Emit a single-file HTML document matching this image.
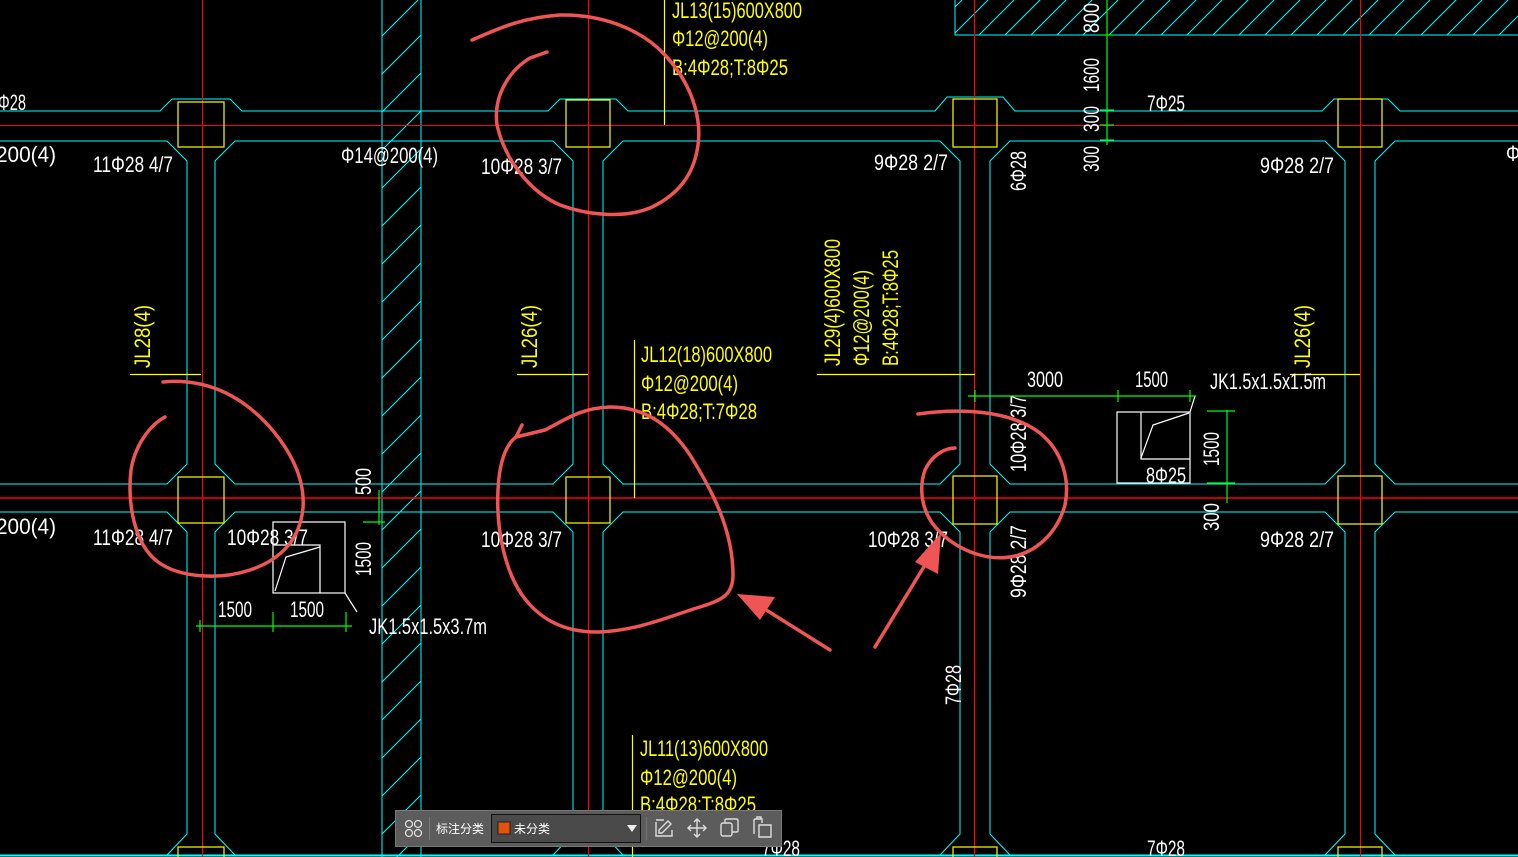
<!DOCTYPE html>
<html><head><meta charset="utf-8">
<style>
html,body{margin:0;padding:0;background:#000;width:1518px;height:857px;overflow:hidden}
svg{display:block}
text{font-family:"Liberation Sans","Noto Sans CJK SC",sans-serif;font-size:22px}
.w{fill:#fff}.y{fill:#ff0}
.tb{font-size:12px;fill:#fff}
</style></head><body>
<svg width="1518" height="857" viewBox="0 0 1518 857" xmlns="http://www.w3.org/2000/svg">
<defs>
<pattern id="h1" patternUnits="userSpaceOnUse" width="38" height="38"><path d="M-2,2 L2,-2 M0,38 L38,0 M36,40 L40,36" stroke="#0ff" stroke-width="1"/></pattern>
<pattern id="h2" patternUnits="userSpaceOnUse" width="26" height="26"><path d="M-2,2 L2,-2 M0,26 L26,0 M24,28 L28,24" stroke="#0ff" stroke-width="1"/></pattern>
</defs>
<rect width="1518" height="857" fill="#000"/>

<rect x="382" y="-2" width="39" height="870" fill="url(#h1)" stroke="#0ff" stroke-width="1"/>
<rect x="955" y="-5" width="580" height="40" fill="url(#h2)" stroke="#0ff" stroke-width="1"/>

<g fill="none" stroke="#0ff" stroke-width="1">
<path d="M-10,111 L160,111 L172,99 L230,99 L242,111 L548,111 L560,99 L616,99 L628,111 L935,111 L947,97 L1003,97 L1015,111 L1322,111 L1334,99 L1388,99 L1400,111 L1530,111"/>
<path d="M-10,141 L167,141 L187,161 L187,464 L167,484 L-10,484"/>
<path d="M215,161 L235,141 L553,141 L573,161 L573,464 L553,484 L235,484 L215,464 Z"/>
<path d="M603,161 L623,141 L940,141 L960,161 L960,464 L940,484 L623,484 L603,464 Z"/>
<path d="M990,161 L1010,141 L1325,141 L1345,161 L1345,464 L1325,484 L1010,484 L990,464 Z"/>
<path d="M1530,141 L1395,141 L1375,161 L1375,464 L1395,484 L1530,484"/>
<path d="M-10,512 L167,512 L187,532 L187,834 L167,855 L-10,855"/>
<path d="M215,532 L235,512 L553,512 L573,532 L573,834 L553,855 L235,855 L215,834 Z"/>
<path d="M603,532 L623,512 L940,512 L960,532 L960,834 L940,855 L623,855 L603,834 Z"/>
<path d="M990,532 L1010,512 L1325,512 L1345,532 L1345,834 L1325,855 L1010,855 L990,834 Z"/>
<path d="M1530,512 L1395,512 L1375,532 L1375,834 L1395,855 L1530,855"/>
</g>
<line x1="0" y1="855.5" x2="1518" y2="855.5" stroke="#0ff" stroke-width="2"/>

<g stroke="#f00">
<line x1="0" y1="125.5" x2="1518" y2="125.5" stroke-width="1"/>
<line x1="0" y1="498" x2="1518" y2="498" stroke-width="1.5"/>
<line x1="202.5" y1="0" x2="202.5" y2="857" stroke-width="1"/>
<line x1="588.5" y1="0" x2="588.5" y2="857" stroke-width="1.2"/>
<line x1="974.5" y1="0" x2="974.5" y2="857" stroke-width="1.2"/>
<line x1="1360.5" y1="0" x2="1360.5" y2="857" stroke-width="1"/>
</g>

<g fill="none" stroke="#ff0" stroke-width="1.2">
<rect x="178" y="102" width="46" height="45"/>
<rect x="566" y="100" width="44" height="47"/>
<rect x="953" y="99" width="44" height="48"/>
<rect x="1338" y="99" width="44" height="48"/>
<rect x="178" y="477" width="46" height="46"/>
<rect x="566" y="477" width="44" height="46"/>
<rect x="953" y="476" width="44" height="48"/>
<rect x="1338" y="476" width="44" height="48"/>
<rect x="178" y="847" width="46" height="20"/>
<rect x="953" y="847" width="44" height="20"/>
<rect x="1338" y="847" width="44" height="20"/>
<line x1="664.5" y1="0" x2="664.5" y2="125"/>
<line x1="634.5" y1="340" x2="634.5" y2="498"/>
<line x1="632.5" y1="735" x2="632.5" y2="857"/>
<line x1="130" y1="374.5" x2="201" y2="374.5"/>
<line x1="517" y1="374.5" x2="588" y2="374.5"/>
<line x1="817" y1="374.5" x2="975" y2="374.5"/>
<line x1="1290" y1="374.5" x2="1360" y2="374.5"/>
</g>

<g class="y">
<text x="672" y="18" textLength="130" lengthAdjust="spacingAndGlyphs">JL13(15)600X800</text>
<text x="672" y="46" textLength="96" lengthAdjust="spacingAndGlyphs">Φ12@200(4)</text>
<text x="672" y="75" textLength="116" lengthAdjust="spacingAndGlyphs">B:4Φ28;T:8Φ25</text>
<text x="641" y="362" textLength="131" lengthAdjust="spacingAndGlyphs">JL12(18)600X800</text>
<text x="641" y="391" textLength="97" lengthAdjust="spacingAndGlyphs">Φ12@200(4)</text>
<text x="641" y="419" textLength="116" lengthAdjust="spacingAndGlyphs">B:4Φ28;T:7Φ28</text>
<text x="640" y="756" textLength="128" lengthAdjust="spacingAndGlyphs">JL11(13)600X800</text>
<text x="640" y="785" textLength="97" lengthAdjust="spacingAndGlyphs">Φ12@200(4)</text>
<text x="640" y="812" textLength="116" lengthAdjust="spacingAndGlyphs">B:4Φ28;T:8Φ25</text>
<text transform="translate(150,368) rotate(-90)" textLength="63" lengthAdjust="spacingAndGlyphs">JL28(4)</text>
<text transform="translate(537,368) rotate(-90)" textLength="63" lengthAdjust="spacingAndGlyphs">JL26(4)</text>
<text transform="translate(1310,368) rotate(-90)" textLength="63" lengthAdjust="spacingAndGlyphs">JL26(4)</text>
<text transform="translate(840,366) rotate(-90)" textLength="127" lengthAdjust="spacingAndGlyphs">JL29(4)600X800</text>
<text transform="translate(869,366) rotate(-90)" textLength="96" lengthAdjust="spacingAndGlyphs">Φ12@200(4)</text>
<text transform="translate(898,366) rotate(-90)" textLength="116" lengthAdjust="spacingAndGlyphs">B:4Φ28;T:8Φ25</text>
</g>

<g class="w">
<text x="-2" y="110" textLength="28" lengthAdjust="spacingAndGlyphs">Φ28</text>
<text x="-4" y="162" textLength="60" lengthAdjust="spacingAndGlyphs">200(4)</text>
<text x="93" y="172" textLength="80" lengthAdjust="spacingAndGlyphs">11Φ28 4/7</text>
<text x="341" y="163" textLength="97" lengthAdjust="spacingAndGlyphs">Φ14@200(4)</text>
<text x="481" y="174" textLength="81" lengthAdjust="spacingAndGlyphs">10Φ28 3/7</text>
<text x="874" y="170" textLength="74" lengthAdjust="spacingAndGlyphs">9Φ28 2/7</text>
<text x="1260" y="173" textLength="74" lengthAdjust="spacingAndGlyphs">9Φ28 2/7</text>
<text x="1506" y="161" textLength="14" lengthAdjust="spacingAndGlyphs">Φ</text>
<text x="1147" y="111" textLength="38" lengthAdjust="spacingAndGlyphs">7Φ25</text>
<text transform="translate(1026,191) rotate(-90)" textLength="40" lengthAdjust="spacingAndGlyphs">6Φ28</text>
<text transform="translate(1099,33) rotate(-90)" textLength="30" lengthAdjust="spacingAndGlyphs">800</text>
<text transform="translate(1099,92) rotate(-90)" textLength="34" lengthAdjust="spacingAndGlyphs">1600</text>
<text transform="translate(1099,132) rotate(-90)" textLength="26" lengthAdjust="spacingAndGlyphs">300</text>
<text transform="translate(1099,172) rotate(-90)" textLength="26" lengthAdjust="spacingAndGlyphs">300</text>
<text x="-4" y="534" textLength="60" lengthAdjust="spacingAndGlyphs">200(4)</text>
<text x="93" y="545" textLength="80" lengthAdjust="spacingAndGlyphs">11Φ28 4/7</text>
<text x="227" y="545" textLength="81" lengthAdjust="spacingAndGlyphs">10Φ28 3/7</text>
<text x="481" y="547" textLength="81" lengthAdjust="spacingAndGlyphs">10Φ28 3/7</text>
<text x="868" y="547" textLength="80" lengthAdjust="spacingAndGlyphs">10Φ28 3/7</text>
<text x="1260" y="547" textLength="74" lengthAdjust="spacingAndGlyphs">9Φ28 2/7</text>
<text transform="translate(371,495) rotate(-90)" textLength="27" lengthAdjust="spacingAndGlyphs">500</text>
<text transform="translate(371,576) rotate(-90)" textLength="34" lengthAdjust="spacingAndGlyphs">1500</text>
<text x="218" y="617" textLength="34" lengthAdjust="spacingAndGlyphs">1500</text>
<text x="290" y="617" textLength="34" lengthAdjust="spacingAndGlyphs">1500</text>
<text x="369" y="634" textLength="118" lengthAdjust="spacingAndGlyphs">JK1.5x1.5x3.7m</text>
<text x="1027" y="387" textLength="36" lengthAdjust="spacingAndGlyphs">3000</text>
<text x="1135" y="387" textLength="33" lengthAdjust="spacingAndGlyphs">1500</text>
<text x="1210" y="389" textLength="116" lengthAdjust="spacingAndGlyphs">JK1.5x1.5x1.5m</text>
<text x="1146" y="483" textLength="40" lengthAdjust="spacingAndGlyphs">8Φ25</text>
<text transform="translate(1219,466) rotate(-90)" textLength="34" lengthAdjust="spacingAndGlyphs">1500</text>
<text transform="translate(1219,531) rotate(-90)" textLength="28" lengthAdjust="spacingAndGlyphs">300</text>
<text transform="translate(1026,472) rotate(-90)" textLength="77" lengthAdjust="spacingAndGlyphs">10Φ28 3/7</text>
<text transform="translate(1026,598) rotate(-90)" textLength="73" lengthAdjust="spacingAndGlyphs">9Φ28 2/7</text>
<text transform="translate(961,705) rotate(-90)" textLength="40" lengthAdjust="spacingAndGlyphs">7Φ28</text>
<text x="762" y="856" textLength="38" lengthAdjust="spacingAndGlyphs">7Φ28</text>
<text x="1147" y="856" textLength="38" lengthAdjust="spacingAndGlyphs">7Φ28</text>
</g>

<g fill="none" stroke="#fff" stroke-width="1.2">
<rect x="273" y="522" width="72" height="71"/>
<polyline points="273,545 320,545 320,593"/>
<polyline points="275,591 286,557 320,547"/>
<line x1="345" y1="593" x2="357" y2="612"/>
<rect x="1117" y="412" width="73" height="71"/>
<polyline points="1141,412 1141,459 1190,459"/>
<polyline points="1141,458 1153,425 1189,413"/>
<line x1="1190" y1="412" x2="1195" y2="396"/>
</g>

<g stroke="#0f0" stroke-width="1.2" fill="none">
<line x1="1107" y1="0" x2="1107" y2="145"/>
<line x1="1100" y1="35" x2="1114" y2="35"/><line x1="1100" y1="110" x2="1114" y2="110"/><line x1="1100" y1="125" x2="1114" y2="125"/><line x1="1100" y1="140" x2="1114" y2="140"/>
<line x1="968" y1="396" x2="1196" y2="396"/>
<line x1="975" y1="390" x2="975" y2="402"/><line x1="1118" y1="390" x2="1118" y2="402"/><line x1="1190" y1="390" x2="1190" y2="402"/>
<line x1="1227" y1="410" x2="1227" y2="503"/>
<line x1="1207" y1="411" x2="1235" y2="411"/><line x1="1207" y1="483" x2="1235" y2="483"/>
<line x1="196" y1="626" x2="352" y2="626"/>
<line x1="273" y1="612" x2="273" y2="632"/><line x1="346" y1="612" x2="346" y2="632"/><line x1="200" y1="620" x2="200" y2="632"/>
<line x1="379" y1="490" x2="379" y2="525"/><line x1="363" y1="522" x2="385" y2="522"/>
</g>

<g fill="none" stroke="#f05555" stroke-width="3.5" stroke-linecap="round" stroke-linejoin="round">
<path d="M472,40 C500,28 520,18 560,15 C600,14 640,28 665,55 C690,82 702,115 698,145 C694,175 678,195 650,208 C625,218 590,216 560,205 C530,192 505,160 497,125 C493,95 510,70 530,58 L547,52"/>
<path d="M163,382 C205,378 240,395 268,425 C292,452 305,480 303,508 C300,540 280,560 250,570 C220,580 180,578 158,562 C135,545 127,505 131,470 C135,445 150,425 165,417"/>
<path d="M522,425 L516,437 L545,430 C565,420 580,408 610,407 C645,407 670,425 690,455 C712,490 733,530 733,575 C733,595 722,600 700,607 C670,616 640,630 600,632 C565,633 540,620 522,595 C505,570 496,530 498,490 C499,465 505,445 516,437"/>
<path d="M918,414 C960,408 1010,410 1040,433 C1063,452 1070,480 1065,505 C1058,530 1040,550 1015,556 C990,562 960,552 940,532 C922,515 918,490 925,470 C932,455 945,448 955,448"/>
<path d="M830,650 L760,606"/>
<path d="M875,647 L925,565"/>
</g>
<g fill="#f05555">
<polygon points="737,594 775,597 760,620"/>
<polygon points="941,533 938,574 915,562"/>
</g>

<g>
<rect x="395.5" y="810.5" width="386" height="36" fill="#5c5c5c" stroke="#7a7a7a"/>
<g fill="none" stroke="#ddd" stroke-width="1.3">
<circle cx="409" cy="824" r="3.5"/><circle cx="418" cy="824" r="3.5"/><circle cx="409" cy="833" r="3.5"/><circle cx="418" cy="833" r="3.5"/>
</g>
<line x1="429.5" y1="817" x2="429.5" y2="840" stroke="#777"/>
<text x="436" y="833" class="tb" font-family="'Noto Sans CJK SC',sans-serif">标注分类</text>
<rect x="491.5" y="814.5" width="149" height="28" fill="#4a4a4a" stroke="#111"/>
<rect x="498" y="822" width="12" height="12" fill="#e3530c" stroke="#111" stroke-width="0.8"/>
<text x="514" y="833" class="tb">未分类</text>
<polygon points="627,825 637,825 632,832" fill="#eee"/>
<line x1="646.5" y1="817" x2="646.5" y2="840" stroke="#777"/>
<g fill="none" stroke="#ddd" stroke-width="1.4">
<path d="M656,822 L656,836 L672,836 L672,830 M659,833 L659,830 L668,821 L671,824 L662,833 Z M664,820 L656,820"/>
<path d="M697,819 L697,837 M688,828 L706,828 M694,822 L697,819 L700,822 M694,834 L697,837 L700,834 M691,825 L688,828 L691,831 M703,825 L706,828 L703,831"/>
<rect x="721" y="823" width="11" height="13" rx="2"/><path d="M725,823 L725,820 Q725,819 727,819 L736,819 Q738,819 738,821 L738,831 Q738,832 736,832 L732,832"/>
<path d="M754,834 L754,820 Q754,819 756,819 L762,819 L762,823 M759,825 L771,825 L771,837 L759,837 Z M757,819 L757,817 L761,817 L761,819"/>
</g>
</g>
</svg>
</body></html>
